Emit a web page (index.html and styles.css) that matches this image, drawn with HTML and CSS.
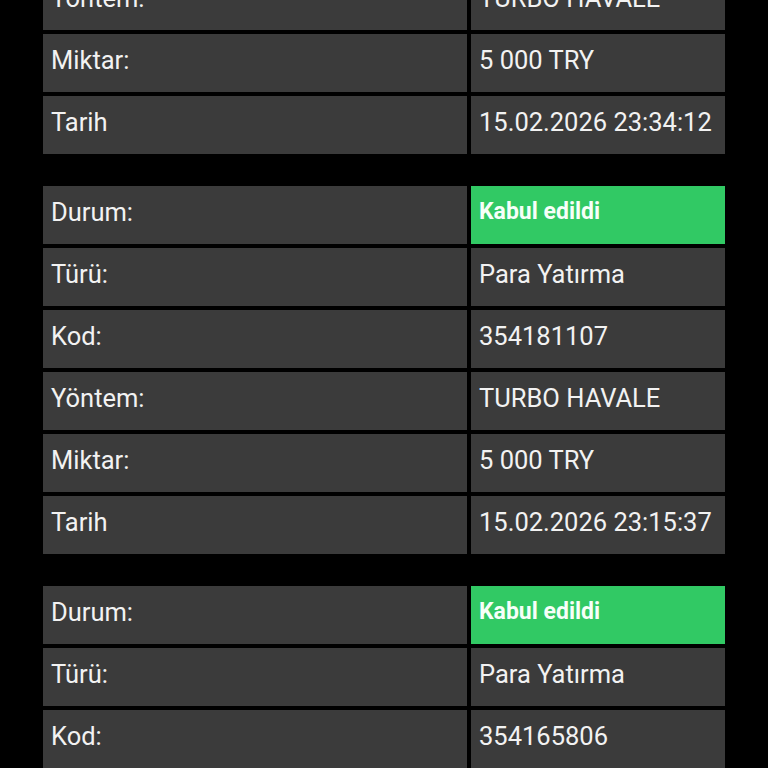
FILE: index.html
```html
<!DOCTYPE html>
<html lang="tr">
<head>
<meta charset="utf-8">
<title>İşlemler</title>
<link rel="stylesheet" href="styles.css">
</head>
<body>
<div class="list">
  <div class="tx">
    <div class="row"><div class="cell key">Durum:</div><div class="cell val ok">Kabul edildi</div></div>
    <div class="row"><div class="cell key">Türü:</div><div class="cell val">Para Yatırma</div></div>
    <div class="row"><div class="cell key">Kod:</div><div class="cell val">354190231</div></div>
    <div class="row"><div class="cell key">Yöntem:</div><div class="cell val">TURBO HAVALE</div></div>
    <div class="row"><div class="cell key">Miktar:</div><div class="cell val">5 000 TRY</div></div>
    <div class="row"><div class="cell key">Tarih</div><div class="cell val">15.02.2026 23:34:12</div></div>
  </div>
  <div class="tx">
    <div class="row"><div class="cell key">Durum:</div><div class="cell val ok">Kabul edildi</div></div>
    <div class="row"><div class="cell key">Türü:</div><div class="cell val">Para Yatırma</div></div>
    <div class="row"><div class="cell key">Kod:</div><div class="cell val">354181107</div></div>
    <div class="row"><div class="cell key">Yöntem:</div><div class="cell val">TURBO HAVALE</div></div>
    <div class="row"><div class="cell key">Miktar:</div><div class="cell val">5 000 TRY</div></div>
    <div class="row"><div class="cell key">Tarih</div><div class="cell val">15.02.2026 23:15:37</div></div>
  </div>
  <div class="tx">
    <div class="row"><div class="cell key">Durum:</div><div class="cell val ok">Kabul edildi</div></div>
    <div class="row"><div class="cell key">Türü:</div><div class="cell val">Para Yatırma</div></div>
    <div class="row"><div class="cell key">Kod:</div><div class="cell val">354165806</div></div>
    <div class="row"><div class="cell key">Yöntem:</div><div class="cell val">TURBO HAVALE</div></div>
    <div class="row"><div class="cell key">Miktar:</div><div class="cell val">5 000 TRY</div></div>
    <div class="row"><div class="cell key">Tarih</div><div class="cell val">15.02.2026 23:02:48</div></div>
  </div>
</div>
</body>
</html>
```
FILE: styles.css
```css
html, body {
  margin: 0;
  padding: 0;
  background: #000;
  overflow: hidden;
  height: 768px;
}
body {
  font-family: Roboto, "Noto Sans", sans-serif;
  color: #f2f2f2;
}
.list {
  display: flex;
  flex-direction: column;
  gap: 32px;
  margin-top: -214px;
  padding: 0 43px;
}
.tx {
  display: flex;
  flex-direction: column;
  gap: 4px;
}
.row {
  display: grid;
  grid-template-columns: 424px 254px;
  column-gap: 4px;
  height: 58px;
}
.cell {
  background: #3b3b3b;
  font-size: 25.5px;
  line-height: 30px;
  padding: 11px 8px 0;
  white-space: nowrap;
}
.ok {
  background: #31c964;
  font-weight: 700;
  font-size: 23px;
  color: #f6fff8;
}
```
